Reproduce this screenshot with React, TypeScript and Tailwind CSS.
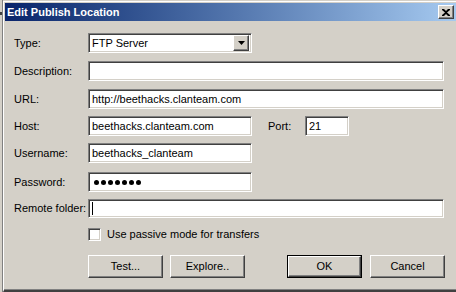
import React from 'react';

const sunken =
    'border border-t-[#808080] border-l-[#808080] border-b-white border-r-white shadow-[inset_1px_1px_0_#404040,inset_-1px_-1px_0_#d4d0c8] bg-white';
const raised =
    'border border-t-white border-l-white border-b-[#404040] border-r-[#404040] shadow-[inset_-1px_-1px_0_#808080] bg-[#d4d0c8]';

function Field({ label, children, className = '' }: { label: string; children: React.ReactNode; className?: string }) {
    return (
        <div className={`flex items-center ${className}`}>
            <span className="w-[83px] shrink-0 pl-[9px] whitespace-nowrap text-black">{label}</span>
            {children}
        </div>
    );
}

function Button({ label, isDefault = false }: { label: string; isDefault?: boolean }) {
    if (isDefault) {
        return (
            <div className="w-[75px] h-[23px] border border-black">
                <div className={`w-full h-full flex items-center justify-center ${raised}`}>{label}</div>
            </div>
        );
    }
    return <div className={`w-[75px] h-[23px] flex items-center justify-center ${raised}`}>{label}</div>;
}

export default function App() {
    return (
        <div
            className="w-[456px] h-[292px] bg-[#d4d0c8] flex overflow-hidden text-[11px] leading-none text-black"
            style={{ fontFamily: '"Liberation Sans", Arial, sans-serif' }}
        >
            {/* window behind */}
            <div className="w-[3px] shrink-0 border-r border-[#808080] relative">
                <div className="absolute left-0 top-[12px] w-[2px] h-[3px] bg-[#404040]" />
            </div>

            {/* dialog */}
            <div className="flex-1 flex flex-col border-l border-t border-white mt-[1px] pl-[1px] pt-[1px] border-b-2 border-b-[#404040] shadow-[inset_0_-1px_0_#808080]">
                {/* title bar */}
                <div className="h-[18px] flex items-center justify-between bg-gradient-to-r from-[#0a246a] to-[#a6caf0] pl-[2px] pr-[2px]">
                    <span className="font-bold text-white text-[11px]">Edit Publish Location</span>
                    <div className={`w-[16px] h-[14px] flex items-center justify-center ${raised}`}>
                        <svg width="8" height="7" viewBox="0 0 8 7">
                            <path d="M0 0h2l2 2 2-2h2v1L5 3.5 8 6v1H6L4 5 2 7H0V6l3-2.5L0 1z" fill="black" />
                        </svg>
                    </div>
                </div>

                {/* form */}
                <div className="flex flex-col pt-[12px]">
                    <Field label="Type:">
                        <div className={`w-[164px] h-[20px] flex items-center justify-between pl-[3px] pr-[2px] ${sunken}`}>
                            <span>FTP Server</span>
                            <div className={`w-[16px] h-[16px] flex items-center justify-center ${raised}`}>
                                <svg width="7" height="4" viewBox="0 0 7 4">
                                    <path d="M0 0h7L3.5 4z" fill="black" />
                                </svg>
                            </div>
                        </div>
                    </Field>
                    <Field label="Description:" className="mt-[8px]">
                        <div className={`w-[356px] h-[20px] ${sunken}`} />
                    </Field>
                    <Field label="URL:" className="mt-[8px]">
                        <div className={`w-[356px] h-[20px] flex items-center pl-[3px] ${sunken}`}>http://beethacks.clanteam.com</div>
                    </Field>
                    <Field label="Host:" className="mt-[7px]">
                        <div className={`w-[164px] h-[20px] flex items-center pl-[3px] ${sunken}`}>beethacks.clanteam.com</div>
                        <span className="ml-[16px] w-[37px]">Port:</span>
                        <div className={`w-[44px] h-[20px] flex items-center pl-[3px] ${sunken}`}>21</div>
                    </Field>
                    <Field label="Username:" className="mt-[7px]">
                        <div className={`w-[164px] h-[20px] flex items-center pl-[3px] ${sunken}`}>beethacks_clanteam</div>
                    </Field>
                    <Field label="Password:" className="mt-[9px]">
                        <div className={`w-[164px] h-[20px] flex items-center gap-[2px] pl-[5px] ${sunken}`}>
                            {Array.from({ length: 7 }).map((_, i) => (
                                <span key={i} className="w-[5px] h-[5px] rounded-full bg-black" />
                            ))}
                        </div>
                    </Field>
                    <Field label="Remote folder:" className="mt-[7px]">
                        <div className={`w-[356px] h-[19px] flex items-center pl-[3px] ${sunken}`}>
                            <span className="w-px h-[13px] bg-black" />
                        </div>
                    </Field>

                    <div className="flex items-center pl-[83px] mt-[10px]">
                        <div className={`w-[13px] h-[13px] ${sunken}`} />
                        <span className="ml-[6px]">Use passive mode for transfers</span>
                    </div>

                    <div className="flex items-center pl-[83px] mt-[14px]">
                        <Button label="Test..." />
                        <div className="ml-[7px]">
                            <Button label="Explore.." />
                        </div>
                        <div className="ml-[42px]">
                            <Button label="OK" isDefault />
                        </div>
                        <div className="ml-[8px]">
                            <Button label="Cancel" />
                        </div>
                    </div>
                </div>
            </div>
        </div>
    );
}
